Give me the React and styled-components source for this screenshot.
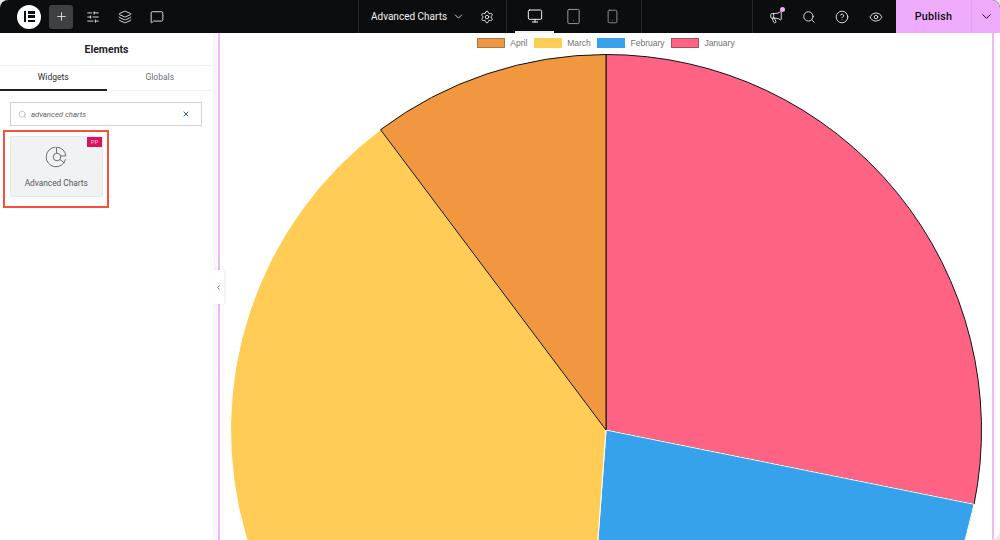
import React, { useState } from "react";
import styled, { createGlobalStyle } from "styled-components";
import {
  ChevronDown,
  ChevronLeft,
  CircleHelp,
  Eye,
  Layers,
  Megaphone,
  MessageSquare,
  Monitor,
  Plus,
  Search,
  Settings,
  SlidersHorizontal,
  Smartphone,
  Tablet,
  X,
} from "lucide-react";

const GlobalStyle = createGlobalStyle`
  html, body {
    margin: 0;
    padding: 0;
    background: #e9e9e9;
  }
  * {
    box-sizing: border-box;
  }
`;

const Page = styled.div`
  width: 1000px;
  height: 540px;
  display: flex;
  flex-direction: column;
  overflow: hidden;
  border-radius: 8px 8px 10px 0;
  background: #fff;
  font-family: Roboto, "Liberation Sans", sans-serif;
`;

const TopBar = styled.header`
  height: 33px;
  flex: none;
  display: flex;
  align-items: stretch;
  background: #0c0d0e;
  color: #f1f1f1;
`;

const LeftTools = styled.div`
  width: 358px;
  display: flex;
  align-items: center;
  padding-left: 17px;
`;

const Logo = styled.div`
  width: 24px;
  height: 24px;
  border-radius: 50%;
  background: #fff;
  display: flex;
  align-items: center;
  justify-content: center;
  gap: 2px;
  margin-right: 8px;
`;

const LogoBar = styled.span`
  width: 2.5px;
  height: 11px;
  background: #0c0d0e;
`;

const LogoLines = styled.span`
  width: 6.5px;
  height: 11px;
  display: flex;
  flex-direction: column;
  justify-content: space-between;
`;

const LogoLine = styled.span`
  height: 2.5px;
  background: #0c0d0e;
`;

const AddButton = styled.div`
  width: 24px;
  height: 24px;
  border-radius: 3px;
  background: #3f4044;
  display: flex;
  align-items: center;
  justify-content: center;
  margin-right: 4px;
`;

const ToolSlot = styled.div`
  width: ${(p) => p.$w || 32}px;
  display: flex;
  align-items: center;
  justify-content: center;
  position: relative;
`;

const TitleArea = styled.div`
  width: 149px;
  display: flex;
  align-items: center;
  padding-left: 12px;
  border-left: 1px solid #26272a;
  border-right: 1px solid #26272a;
`;

const DocTitle = styled.span`
  font-size: 10px;
  width: 78px;
  white-space: nowrap;
`;

const Devices = styled.div`
  width: 135px;
  display: flex;
  padding-left: 8px;
  border-right: 1px solid #26272a;
`;

const DeviceTab = styled.div`
  width: 39px;
  display: flex;
  align-items: center;
  justify-content: center;
  border-bottom: 2px solid ${(p) => (p.$active ? "#f1f1f1" : "transparent")};
  padding-top: 1px;
`;

const Spacer = styled.div`
  width: 111px;
  border-right: 1px solid #26272a;
`;

const RightTools = styled.div`
  width: 143px;
  display: flex;
  padding-left: 6px;
`;

const Dot = styled.span`
  position: absolute;
  top: 7px;
  left: 21px;
  width: 5px;
  height: 5px;
  border-radius: 50%;
  background: #f0abfc;
`;

const PublishButton = styled.div`
  width: 75px;
  display: flex;
  align-items: center;
  justify-content: center;
  background: #efabfb;
  color: #0c0d0e;
  font-size: 10.8px;
  font-weight: 500;
  letter-spacing: 0.2px;
`;

const PublishMenu = styled.div`
  width: 29px;
  display: flex;
  align-items: center;
  justify-content: center;
  background: #efabfb;
  border-left: 1px solid #e69ff3;
  color: #0c0d0e;
`;

const Workspace = styled.main`
  flex: 1;
  min-height: 0;
  display: flex;
  position: relative;
`;

const Panel = styled.aside`
  width: 213px;
  flex: none;
  background: #fff;
  box-shadow: 1px 0 3px rgba(0, 0, 0, 0.1);
  display: flex;
  flex-direction: column;
`;

const PanelTitle = styled.div`
  height: 33px;
  display: flex;
  align-items: center;
  justify-content: center;
  font-size: 10.5px;
  font-weight: 700;
  color: #1f2124;
  border-bottom: 1px solid #f1f2f3;
`;

const Tabs = styled.div`
  height: 25px;
  display: flex;
  border-bottom: 1px solid #f1f2f3;
`;

const Tab = styled.div`
  flex: 1;
  display: flex;
  align-items: center;
  justify-content: center;
  font-size: 8.5px;
  padding-bottom: 2px;
  color: ${(p) => (p.$active ? "#2b2c2f" : "#6d7074")};
  border-bottom: 2px solid ${(p) => (p.$active ? "#1f2124" : "transparent")};
  margin-bottom: -1px;
`;

const SearchBox = styled.div`
  margin: 11px 11px 0 10px;
  height: 24px;
  border: 1px solid #d0d2d5;
  display: flex;
  align-items: center;
  padding: 0 11px 0 7px;
  color: #9a9ea3;
`;

const SearchText = styled.span`
  flex: 1;
  margin-left: 4px;
  font-size: 7.7px;
  font-style: italic;
  color: #5f6367;
`;

const Highlight = styled.div`
  margin: 4px 0 0 3px;
  width: 105.5px;
  height: 77.5px;
  border: 2.5px solid #f4523f;
  padding: 3.5px 3.5px 0 4.5px;
`;

const WidgetCard = styled.div`
  height: 61px;
  background: #f1f2f3;
  border: 1px solid #e6e8ea;
  border-radius: 2px;
  position: relative;
  display: flex;
  flex-direction: column;
  align-items: center;
  padding-top: 9px;
  color: #6b6f73;
`;

const ProBadge = styled.span`
  position: absolute;
  top: 0;
  right: 0;
  width: 15px;
  height: 10px;
  background: #d9135f;
  color: #f7c5d9;
  font-size: 6px;
  line-height: 10px;
  text-align: center;
`;

const WidgetName = styled.span`
  margin-top: 10px;
  font-size: 8.3px;
  color: #53575b;
`;

const Gutter = styled.div`
  width: 4px;
  flex: none;
  background: #f7f7f7;
`;

const CollapseTab = styled.div`
  position: absolute;
  left: 213px;
  top: 237px;
  width: 11px;
  height: 34px;
  background: #fff;
  box-shadow: 1px 0 3px rgba(0, 0, 0, 0.08);
  display: flex;
  align-items: center;
  justify-content: center;
  color: #55595e;
`;

const Canvas = styled.section`
  margin-left: 0.5px;
  width: 776.5px;
  border-left: 2px solid #f2b6fb;
  border-right: 2px solid #f2b6fb;
  overflow: hidden;
  display: flex;
  flex-direction: column;
  align-items: center;
`;

const Legend = styled.div`
  height: 20px;
  flex: none;
  display: flex;
  align-items: center;
  gap: 6.3px;
  font-family: "Liberation Sans", Arial, sans-serif;
  font-size: 8.5px;
  color: #6f6f6f;
`;

const LegendItem = styled.div`
  display: flex;
  align-items: center;
  gap: 5.5px;
`;

const Swatch = styled.span`
  width: 28px;
  height: 10px;
  background: ${(p) => p.$color};
  border: 1px solid ${(p) => p.$edge};
`;

const PieSvg = styled.svg`
  flex: none;
  display: block;
`;

const slices = [
  { name: "January", color: "#ff6384", stroke: "#111", from: 0, to: 101.4 },
  { name: "February", color: "#36a2eb", stroke: "#fff", from: 101.4, to: 184.2 },
  { name: "March", color: "#ffcd56", stroke: "#fff", from: 184.2, to: 323.1 },
  { name: "April", color: "#f0973f", stroke: "#111", from: 323.1, to: 360 },
];

const legend = [
  { name: "April", color: "#f0973f", edge: "#a5784f" },
  { name: "March", color: "#ffcd56", edge: "#ffcd56" },
  { name: "February", color: "#36a2eb", edge: "#36a2eb" },
  { name: "January", color: "#ff6384", edge: "#a8505f" },
];

const CX = 378;
const CY = 377;
const R = 375.5;

const slicePath = ({ from, to }) => {
  const point = (deg) => {
    const a = (deg * Math.PI) / 180;
    return `${CX + R * Math.sin(a)} ${CY - R * Math.cos(a)}`;
  };
  const large = to - from > 180 ? 1 : 0;
  return `M${CX} ${CY} L${point(from)} A${R} ${R} 0 ${large} 1 ${point(to)} Z`;
};

const ChartIcon = () => (
  <svg width="22" height="22" viewBox="0 0 22 22" fill="none" stroke="currentColor" strokeWidth="1">
    <path d="M10.6 1.2a9.8 9.8 0 1 0 9.9 12" />
    <path d="M12 1.2a9.4 9.4 0 0 1 8.8 8.8H15.5" />
    <path d="M11.5 1.2V7" />
    <circle cx="12" cy="11" r="3.8" />
    <path d="M15 13.5l4.6 3.6" />
  </svg>
);

const App = () => {
  const [tab] = useState("Widgets");
  const bar = { size: 14, strokeWidth: 1.5 };
  return (
    <Page>
      <GlobalStyle />
      <TopBar>
        <LeftTools>
          <Logo>
            <LogoBar />
            <LogoLines>
              <LogoLine />
              <LogoLine />
              <LogoLine />
            </LogoLines>
          </Logo>
          <AddButton>
            <Plus size={13} strokeWidth={1.5} />
          </AddButton>
          <ToolSlot>
            <SlidersHorizontal {...bar} />
          </ToolSlot>
          <ToolSlot>
            <Layers {...bar} />
          </ToolSlot>
          <ToolSlot>
            <MessageSquare {...bar} />
          </ToolSlot>
        </LeftTools>
        <TitleArea>
          <DocTitle>Advanced Charts</DocTitle>
          <ToolSlot $w={20}>
            <ChevronDown size={13} strokeWidth={1.5} />
          </ToolSlot>
          <ToolSlot $w={38}>
            <Settings {...bar} />
          </ToolSlot>
        </TitleArea>
        <Devices>
          <DeviceTab $active>
            <Monitor size={16} strokeWidth={1.5} />
          </DeviceTab>
          <DeviceTab>
            <Tablet size={17} strokeWidth={1.3} color="#a4a6a9" />
          </DeviceTab>
          <DeviceTab>
            <Smartphone size={15} strokeWidth={1.3} color="#a4a6a9" />
          </DeviceTab>
        </Devices>
        <Spacer />
        <RightTools>
          <ToolSlot $w={33}>
            <Megaphone size={14} strokeWidth={1.5} />
            <Dot />
          </ToolSlot>
          <ToolSlot $w={33}>
            <Search {...bar} />
          </ToolSlot>
          <ToolSlot $w={34}>
            <CircleHelp {...bar} />
          </ToolSlot>
          <ToolSlot $w={33}>
            <Eye {...bar} />
          </ToolSlot>
        </RightTools>
        <PublishButton>Publish</PublishButton>
        <PublishMenu>
          <ChevronDown size={15} strokeWidth={1.5} />
        </PublishMenu>
      </TopBar>
      <Workspace>
        <Panel>
          <PanelTitle>Elements</PanelTitle>
          <Tabs>
            <Tab $active={tab === "Widgets"}>Widgets</Tab>
            <Tab $active={tab === "Globals"}>Globals</Tab>
          </Tabs>
          <SearchBox>
            <Search size={9} strokeWidth={1.5} />
            <SearchText>advanced charts</SearchText>
            <X size={8} strokeWidth={3} color="#2c5aa0" />
          </SearchBox>
          <Highlight>
            <WidgetCard>
              <ProBadge>PP</ProBadge>
              <ChartIcon />
              <WidgetName>Advanced Charts</WidgetName>
            </WidgetCard>
          </Highlight>
        </Panel>
        <Gutter />
        <CollapseTab>
          <ChevronLeft size={7} strokeWidth={2.5} />
        </CollapseTab>
        <Canvas>
          <Legend>
            {legend.map((item) => (
              <LegendItem key={item.name}>
                <Swatch $color={item.color} $edge={item.edge} />
                <span>{item.name}</span>
              </LegendItem>
            ))}
          </Legend>
          <PieSvg width="756" height="756" viewBox="0 0 756 756">
            {slices.map((slice) => (
              <path
                key={slice.name}
                d={slicePath(slice)}
                fill={slice.color}
                stroke={slice.stroke}
                strokeWidth="1"
              />
            ))}
          </PieSvg>
        </Canvas>
      </Workspace>
    </Page>
  );
};

export default App;
